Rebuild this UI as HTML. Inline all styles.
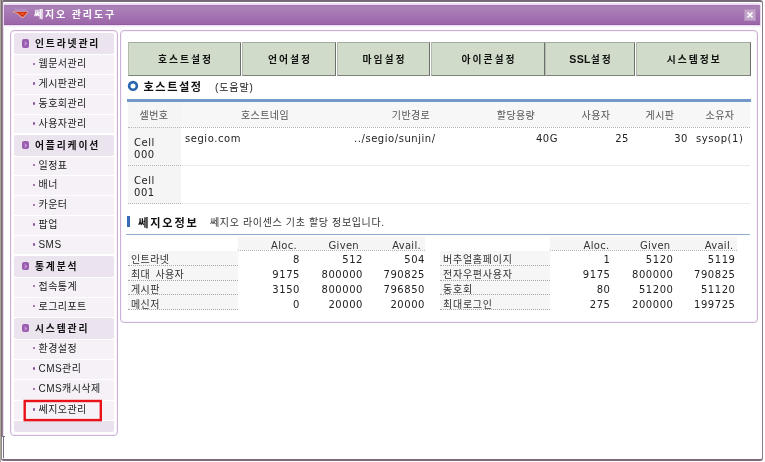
<!DOCTYPE html><html lang="ko"><head><meta charset="utf-8"><title>쎄지오 관리도구</title><style>
*{margin:0;padding:0;box-sizing:border-box}
html,body{width:765px;height:462px;overflow:hidden;background:#fff}
body{position:relative;will-change:transform;font-family:"Liberation Sans","Noto Sans CJK KR",sans-serif;font-size:10px;color:#222;line-height:1}
.a{position:absolute;white-space:nowrap}
.k{font-family:"Liberation Sans","Noto Sans CJK KR",sans-serif}
.l{font-family:"DejaVu Sans","Noto Sans CJK KR",sans-serif;letter-spacing:.55px}
.b{font-weight:bold}
#edgeL{left:0;top:0;width:1px;height:462px;background:#a9a89b}
#frame{left:1px;top:0;width:761.6px;height:460.5px;border:2px solid #7b6b7d;border-top-color:#756a76;border-top-width:2.6px;border-right-color:#8a7a8c;border-radius:3px;border-right-width:1.5px;border-bottom-width:2px;background:#fff}
#tbar{left:3px;top:2.5px;width:758px;height:22.5px;border-radius:4px 4px 0 0;background:linear-gradient(#eddff3 0,#eddff3 1.5px,#a274b1 2px,#ab83b8 4px,#a777b4 10px,#9c66a9 21px,#87528f 22px,#87528f 23px);border-left:1px solid #e6d6ec;border-right:1px solid #e6d6ec}
#tshadow{left:3px;top:25px;width:758px;height:2px;background:linear-gradient(#ecdcf3,#fbf4fe)}
#title{left:34px;top:9.5px;font-size:10px;font-weight:bold;color:#fff;letter-spacing:1.85px}
#close{left:744px;top:9px;width:12px;height:12px;background:#c3a5cb;border:1px solid #b28fbd;color:#fff}
.panel{border:1px solid #cab2d3;border-radius:4px;background:#fff;box-shadow:inset 0 0 0 1px #fbf0fd}
#side{left:10px;top:30px;width:108px;height:405.6px}
#main{left:120px;top:30px;width:637.5px;height:292.5px}
.sh{left:3px;width:100px;height:21px;background:#ebe3ee;border-radius:2px}
.si{left:3px;width:100px;height:19px;background:#f5f1f7}
.sh span{position:absolute;left:21px;top:6.3px;font-weight:bold;font-size:9.8px;letter-spacing:1.85px;color:#111}
.sh i{position:absolute;left:8px;top:6.4px;width:7px;height:8.5px;border-radius:2px;background:#9a5eb0}
.si span{position:absolute;left:24.5px;top:4px;font-size:10px;letter-spacing:.45px;color:#222}
.si i{position:absolute;left:18.5px;top:7.5px;width:2.4px;height:2.4px;border-radius:1px;background:#8d4f9e}
.tab{top:42px;height:34px;padding-left:2px;background:#d0dcc9;border:1px solid;border-color:#a3aba1 #6c706b #7c817a #b3bab0;text-align:center;font-weight:bold;font-size:9.8px;letter-spacing:1.95px;color:#111;line-height:33px}
</style></head><body>
<div class="a" id="frame"></div>
<div class="a" id="edgeL"></div>
<div class="a" style="left:1px;top:0;width:1px;height:460px;background:linear-gradient(#776a72 0,#776a72 436px,#8b878a 437px)"></div>
<div class="a" style="left:2px;top:1px;width:1px;height:436px;background:#9a8198"></div>
<div class="a" style="left:2px;top:437px;width:1px;height:22px;background:#fff"></div>
<div class="a" style="left:3px;top:3px;width:1px;height:433px;background:#eadff0"></div>
<div class="a" style="left:1px;top:436px;width:4px;height:1px;background:#7d6f80"></div>
<div class="a" style="left:3px;top:437px;width:1px;height:21px;background:#7b6b83"></div>
<div class="a" id="tbar"></div><div class="a" id="tshadow"></div>
<svg class="a" style="left:10px;top:6px" width="22" height="16" viewBox="10 6 22 16"><rect x="15" y="8.8" width="12" height="2.2" fill="#c9b0e0" opacity=".3"/><path d="M12.8 11.9 L28.4 11.9 L23.2 17.8 L21.2 17.3 L17 13.4 Z" fill="#f2a884" stroke="#eeb09a" stroke-width="1" stroke-linejoin="round" opacity=".75"/><path d="M14 12 L27.6 12 L23 17 L21.6 16.6 L17.6 13 Z" fill="#d63410"/><path d="M19.5 13.2 L24.6 13.2 L22.8 15 Z" fill="#ec6236"/></svg>
<div class="a" id="title">쎄지오 관리도구</div>
<div class="a" id="close"><svg width="10" height="10" viewBox="0 0 10 10" style="position:absolute;left:0;top:0"><path d="M2.5 2.5 L7.5 7.5 M7.5 2.5 L2.5 7.5" stroke="#fff" stroke-width="1.6"/></svg></div>
<div class="a panel" id="side">
<div class="a sh" style="top:2px"><i></i><svg class="a" style="left:8px;top:6.2px" width="7" height="9" viewBox="0 0 7 9"><path d="M2.1 2 L5.2 4.5 L2.1 7 L3.3 4.5 Z" fill="#d6a6e6"/></svg><span>인트라넷관리</span></div>
<div class="a si" style="top:24.0px;height:18.88px"><i></i><span>웹문서관리</span></div>
<div class="a si" style="top:43.88px;height:18.88px"><i></i><span>게시판관리</span></div>
<div class="a si" style="top:63.75px;height:18.88px"><i></i><span>동호회관리</span></div>
<div class="a si" style="top:83.62px;height:18.88px"><i></i><span>사용자관리</span></div>
<div class="a sh" style="top:103.5px"><i></i><svg class="a" style="left:8px;top:6.2px" width="7" height="9" viewBox="0 0 7 9"><path d="M2.1 2 L5.2 4.5 L2.1 7 L3.3 4.5 Z" fill="#d6a6e6"/></svg><span>어플리케이션</span></div>
<div class="a si" style="top:125.5px;height:18.8px"><i></i><span>일정표</span></div>
<div class="a si" style="top:145.3px;height:18.8px"><i></i><span>배너</span></div>
<div class="a si" style="top:165.1px;height:18.8px"><i></i><span>카운터</span></div>
<div class="a si" style="top:184.9px;height:18.8px"><i></i><span>팝업</span></div>
<div class="a si" style="top:204.7px;height:18.8px"><i></i><span>SMS</span></div>
<div class="a sh" style="top:224.5px"><i></i><svg class="a" style="left:8px;top:6.2px" width="7" height="9" viewBox="0 0 7 9"><path d="M2.1 2 L5.2 4.5 L2.1 7 L3.3 4.5 Z" fill="#d6a6e6"/></svg><span>통계분석</span></div>
<div class="a si" style="top:246.5px;height:19.0px"><i></i><span>접속통계</span></div>
<div class="a si" style="top:266.5px;height:19.0px"><i></i><span>로그리포트</span></div>
<div class="a sh" style="top:286.5px"><i></i><svg class="a" style="left:8px;top:6.2px" width="7" height="9" viewBox="0 0 7 9"><path d="M2.1 2 L5.2 4.5 L2.1 7 L3.3 4.5 Z" fill="#d6a6e6"/></svg><span>시스템관리</span></div>
<div class="a si" style="top:308.5px;height:19.38px"><i></i><span>환경설정</span></div>
<div class="a si" style="top:328.88px;height:19.38px"><i></i><span>CMS관리</span></div>
<div class="a si" style="top:349.25px;height:19.38px"><i></i><span>CMS캐시삭제</span></div>
<div class="a si" style="top:369.62px;height:19.38px"><i></i><span>쎄지오관리</span></div>
<div class="a" style="left:3px;top:390px;width:100px;height:10.6px;background:#e9e1ec;border-radius:0 0 2px 2px"></div>
</div>
<svg class="a" style="left:22px;top:398px" width="82" height="25" viewBox="22 398 82 25"><rect x="24.7" y="401" width="76.1" height="19.1" fill="none" stroke="#ea1218" stroke-width="2.4"/></svg>
<div class="a panel" id="main"></div>
<div class="a tab" style="left:128px;width:113px">호스트설정</div>
<div class="a tab" style="left:242px;width:94px">언어설정</div>
<div class="a tab" style="left:337px;width:93px">마임설정</div>
<div class="a tab" style="left:431px;width:114px">아이콘설정</div>
<div class="a tab" style="left:545px;width:90px"><span style="letter-spacing:.3px;font-size:10.6px">SSL</span>설정</div>
<div class="a tab" style="left:636px;width:114.5px">시스템정보</div>
<svg class="a" style="left:127px;top:80px" width="12" height="12" viewBox="0 0 12 12"><circle cx="6" cy="5.9" r="3.85" fill="#fff" stroke="#2867ae" stroke-width="2.7"/></svg>
<div class="a b" style="left:143.5px;top:82px;font-size:11.2px;letter-spacing:1.55px;color:#111">호스트설정</div>
<div class="a" style="left:215px;top:83px;font-size:10px;letter-spacing:.9px;color:#222">(도움말)</div>
<div class="a" style="left:127px;top:99px;width:624px;height:3px;background:#7399cb"></div>
<div class="a" style="left:128px;top:102px;width:622px;height:25px;background:#f7f7f8"></div>
<div class="a" style="left:128px;top:102px;width:53px;height:102px;background:#f5f5f6"></div>
<div class="a" style="left:128px;top:127px;width:622px;border-top:1px dotted #b5b5b5"></div>
<div class="a" style="left:181px;top:165px;width:569px;border-top:1px solid #ececec"></div>
<div class="a" style="left:128px;top:165px;width:53px;border-top:1px dotted #b5b5b5"></div>
<div class="a" style="left:181px;top:203px;width:569px;border-top:1px solid #ececec"></div>
<div class="a" style="left:128px;top:203px;width:53px;border-top:1px dotted #b5b5b5"></div>
<div class="a" style="left:114px;top:110.5px;width:80px;text-align:center;font-size:10px;letter-spacing:.4px;color:#555">셀번호</div>
<div class="a" style="left:225px;top:110.5px;width:80px;text-align:center;font-size:10px;letter-spacing:.4px;color:#555">호스트네임</div>
<div class="a" style="left:371px;top:110.5px;width:80px;text-align:center;font-size:10px;letter-spacing:.4px;color:#555">기반경로</div>
<div class="a" style="left:476px;top:110.5px;width:80px;text-align:center;font-size:10px;letter-spacing:.4px;color:#555">할당용량</div>
<div class="a" style="left:556px;top:110.5px;width:80px;text-align:center;font-size:10px;letter-spacing:.4px;color:#555">사용자</div>
<div class="a" style="left:620px;top:110.5px;width:80px;text-align:center;font-size:10px;letter-spacing:.4px;color:#555">게시판</div>
<div class="a" style="left:680px;top:110.5px;width:80px;text-align:center;font-size:10px;letter-spacing:.4px;color:#555">소유자</div>
<div class="a l" style="left:134px;top:136.5px;font-size:10px;line-height:12px;color:#222">Cell<br>000</div>
<div class="a l" style="left:134px;top:174.5px;font-size:10px;line-height:12px;color:#222">Cell<br>001</div>
<div class="a l" style="left:185px;top:134px;font-size:10px;color:#222">segio.com</div>
<div class="a l" style="left:354px;top:134px;font-size:10px;color:#222">../segio/sunjin/</div>
<div class="a l" style="left:498px;top:134px;width:60px;text-align:right;font-size:10px;color:#222">40G</div>
<div class="a l" style="left:569px;top:134px;width:60px;text-align:right;font-size:10px;color:#222">25</div>
<div class="a l" style="left:628px;top:134px;width:60px;text-align:right;font-size:10px;color:#222">30</div>
<div class="a l" style="left:696px;top:134px;font-size:10px;color:#222">sysop(1)</div>
<div class="a" style="left:127px;top:216px;width:2.6px;height:10.5px;background:#3a6ab5"></div>
<div class="a b" style="left:138px;top:217.5px;font-size:11.2px;letter-spacing:1.85px;color:#111">쎄지오정보</div>
<div class="a" style="left:210px;top:218px;font-size:10px;letter-spacing:.65px;color:#333">쎄지오 라이센스 기초 할당 정보입니다.</div>
<div class="a" style="left:126px;top:234px;width:624px;height:1px;background:#8fafd0"></div>
<div class="a" style="left:238px;top:237px;width:187px;height:13px;background:#f5f5f5"></div>
<div class="a" style="left:238px;top:250px;width:187px;border-top:1px dotted #b5b5b5"></div>
<div class="a" style="left:128px;top:251px;width:110px;height:59px;background:#f6f6f6"></div>
<div class="a l" style="left:237px;top:240.6px;width:60px;text-align:right;font-size:10px;letter-spacing:.3px;color:#333">Aloc.</div>
<div class="a l" style="left:299px;top:240.6px;width:60px;text-align:right;font-size:10px;letter-spacing:.3px;color:#333">Given</div>
<div class="a l" style="left:361px;top:240.6px;width:60px;text-align:right;font-size:10px;letter-spacing:.3px;color:#333">Avail.</div>
<div class="a" style="left:131px;top:255px;font-size:10px;letter-spacing:0.4px;word-spacing:2px;color:#333">인트라넷</div>
<div class="a" style="left:128px;top:265px;width:110px;border-top:1px dotted #a8a8a8"></div>
<div class="a l" style="left:230px;top:255px;width:70px;text-align:right;font-size:10px;color:#222">8</div>
<div class="a l" style="left:293px;top:255px;width:70px;text-align:right;font-size:10px;color:#222">512</div>
<div class="a l" style="left:355px;top:255px;width:70px;text-align:right;font-size:10px;color:#222">504</div>
<div class="a" style="left:131px;top:270px;font-size:10px;letter-spacing:0.4px;word-spacing:2px;color:#333">최대 사용자</div>
<div class="a" style="left:128px;top:279.5px;width:110px;border-top:1px dotted #a8a8a8"></div>
<div class="a l" style="left:230px;top:270px;width:70px;text-align:right;font-size:10px;color:#222">9175</div>
<div class="a l" style="left:293px;top:270px;width:70px;text-align:right;font-size:10px;color:#222">800000</div>
<div class="a l" style="left:355px;top:270px;width:70px;text-align:right;font-size:10px;color:#222">790825</div>
<div class="a" style="left:131px;top:284.5px;font-size:10px;letter-spacing:0.4px;word-spacing:2px;color:#333">게시판</div>
<div class="a" style="left:128px;top:294px;width:110px;border-top:1px dotted #a8a8a8"></div>
<div class="a l" style="left:230px;top:284.5px;width:70px;text-align:right;font-size:10px;color:#222">3150</div>
<div class="a l" style="left:293px;top:284.5px;width:70px;text-align:right;font-size:10px;color:#222">800000</div>
<div class="a l" style="left:355px;top:284.5px;width:70px;text-align:right;font-size:10px;color:#222">796850</div>
<div class="a" style="left:131px;top:299.5px;font-size:10px;letter-spacing:0.4px;word-spacing:2px;color:#333">메신저</div>
<div class="a" style="left:128px;top:309px;width:110px;border-top:1px dotted #a8a8a8"></div>
<div class="a l" style="left:230px;top:299.5px;width:70px;text-align:right;font-size:10px;color:#222">0</div>
<div class="a l" style="left:293px;top:299.5px;width:70px;text-align:right;font-size:10px;color:#222">20000</div>
<div class="a l" style="left:355px;top:299.5px;width:70px;text-align:right;font-size:10px;color:#222">20000</div>
<div class="a" style="left:550px;top:237px;width:187px;height:13px;background:#f5f5f5"></div>
<div class="a" style="left:550px;top:250px;width:187px;border-top:1px dotted #b5b5b5"></div>
<div class="a" style="left:440px;top:251px;width:110px;height:59px;background:#f6f6f6"></div>
<div class="a l" style="left:549.5px;top:240.6px;width:60px;text-align:right;font-size:10px;letter-spacing:.3px;color:#333">Aloc.</div>
<div class="a l" style="left:610.5px;top:240.6px;width:60px;text-align:right;font-size:10px;letter-spacing:.3px;color:#333">Given</div>
<div class="a l" style="left:673.5px;top:240.6px;width:60px;text-align:right;font-size:10px;letter-spacing:.3px;color:#333">Avail.</div>
<div class="a" style="left:443px;top:255px;font-size:10px;letter-spacing:0.75px;word-spacing:2px;color:#333">버추얼홈페이지</div>
<div class="a" style="left:440px;top:265px;width:110px;border-top:1px dotted #a8a8a8"></div>
<div class="a l" style="left:540.5px;top:255px;width:70px;text-align:right;font-size:10px;color:#222">1</div>
<div class="a l" style="left:603.5px;top:255px;width:70px;text-align:right;font-size:10px;color:#222">5120</div>
<div class="a l" style="left:665.5px;top:255px;width:70px;text-align:right;font-size:10px;color:#222">5119</div>
<div class="a" style="left:443px;top:270px;font-size:10px;letter-spacing:0.75px;word-spacing:2px;color:#333">전자우편사용자</div>
<div class="a" style="left:440px;top:279.5px;width:110px;border-top:1px dotted #a8a8a8"></div>
<div class="a l" style="left:540.5px;top:270px;width:70px;text-align:right;font-size:10px;color:#222">9175</div>
<div class="a l" style="left:603.5px;top:270px;width:70px;text-align:right;font-size:10px;color:#222">800000</div>
<div class="a l" style="left:665.5px;top:270px;width:70px;text-align:right;font-size:10px;color:#222">790825</div>
<div class="a" style="left:443px;top:284.5px;font-size:10px;letter-spacing:0.75px;word-spacing:2px;color:#333">동호회</div>
<div class="a" style="left:440px;top:294px;width:110px;border-top:1px dotted #a8a8a8"></div>
<div class="a l" style="left:540.5px;top:284.5px;width:70px;text-align:right;font-size:10px;color:#222">80</div>
<div class="a l" style="left:603.5px;top:284.5px;width:70px;text-align:right;font-size:10px;color:#222">51200</div>
<div class="a l" style="left:665.5px;top:284.5px;width:70px;text-align:right;font-size:10px;color:#222">51120</div>
<div class="a" style="left:443px;top:299.5px;font-size:10px;letter-spacing:0.75px;word-spacing:2px;color:#333">최대로그인</div>
<div class="a" style="left:440px;top:309px;width:110px;border-top:1px dotted #a8a8a8"></div>
<div class="a l" style="left:540.5px;top:299.5px;width:70px;text-align:right;font-size:10px;color:#222">275</div>
<div class="a l" style="left:603.5px;top:299.5px;width:70px;text-align:right;font-size:10px;color:#222">200000</div>
<div class="a l" style="left:665.5px;top:299.5px;width:70px;text-align:right;font-size:10px;color:#222">199725</div>
</body></html>
